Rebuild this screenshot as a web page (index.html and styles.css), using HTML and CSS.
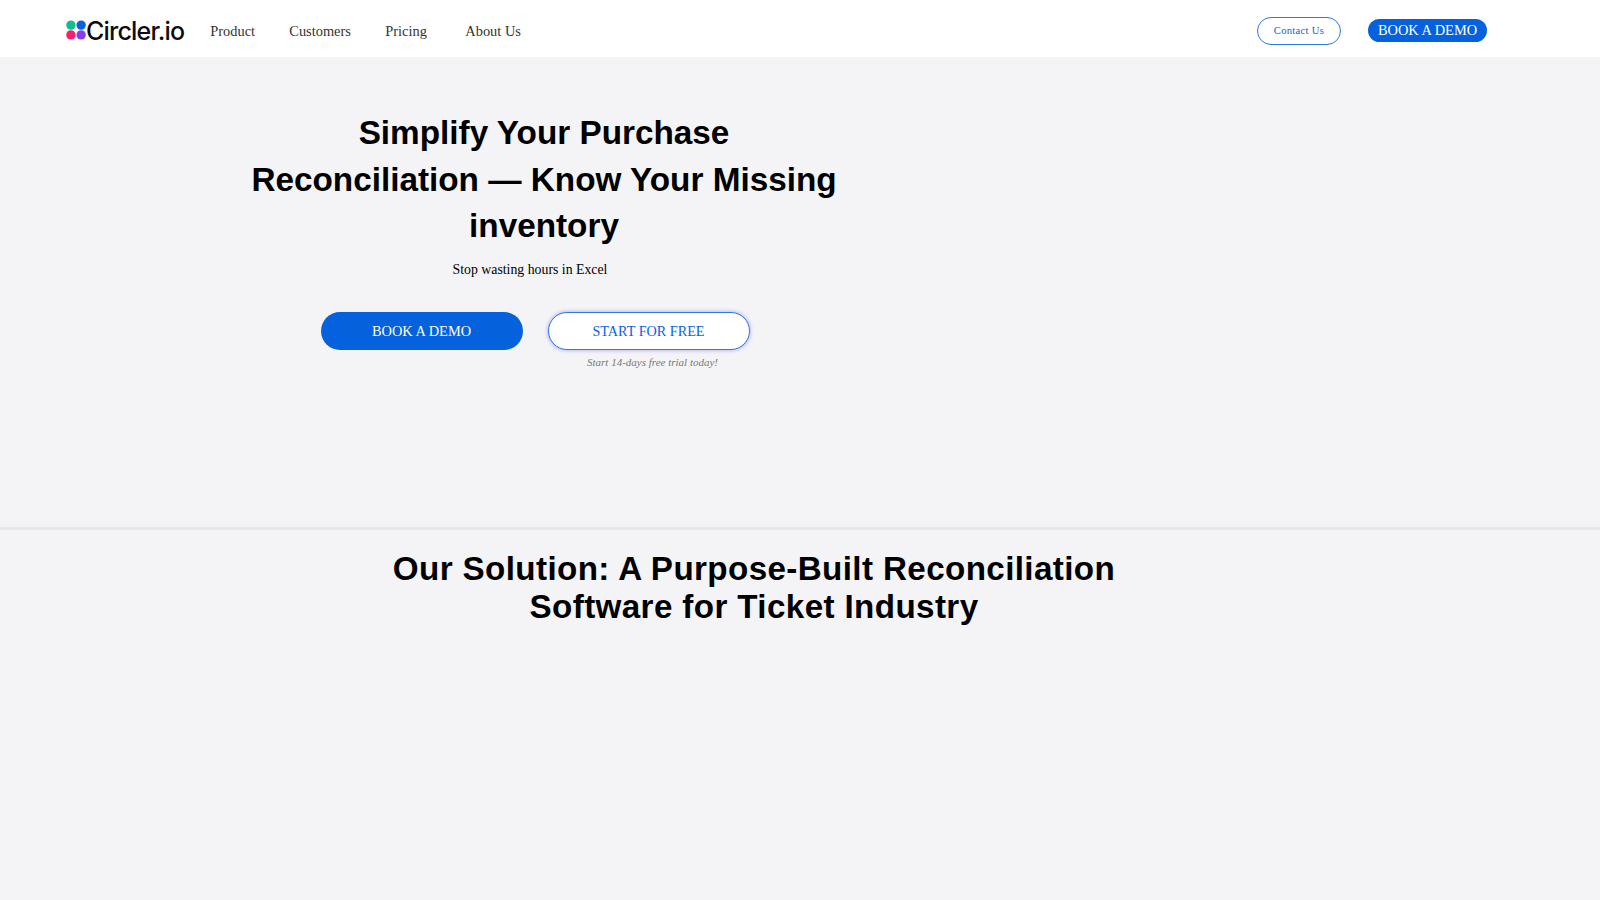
FILE: index.html
```html
<!DOCTYPE html>
<html lang="en">
<head>
  <meta charset="UTF-8">
  <title>Circler.io</title>
  <link rel="stylesheet" href="styles.css">
</head>
<body>
  <header class="nav">
    <a class="logo" href="#">
      <svg class="logo-mark" width="20" height="20" viewBox="0 0 20.5 20">
        <circle cx="5" cy="5" r="4.8" fill="#0fbf8f"/>
        <circle cx="15.5" cy="5" r="4.8" fill="#0b62e0"/>
        <circle cx="5" cy="15" r="4.8" fill="#f5206f"/>
        <circle cx="15.5" cy="15" r="4.8" fill="#8a3cf0"/>
      </svg>
      <span>Circler.io</span>
    </a>
    <nav class="nav-links">
      <a href="#">Product</a>
      <a href="#">Customers</a>
      <a href="#">Pricing</a>
      <a href="#">About Us</a>
    </nav>
    <div class="nav-actions">
      <a class="contact" href="#">Contact Us</a>
      <a class="demo-small" href="#">BOOK A DEMO</a>
    </div>
  </header>

  <section class="hero">
    <div class="hero-inner">
      <h1>Simplify Your Purchase Reconciliation — Know Your Missing inventory</h1>
      <p class="sub">Stop wasting hours in Excel</p>
      <div class="cta">
        <a class="btn btn-blue" href="#">BOOK A DEMO</a>
        <div class="cta-free">
          <a class="btn btn-white" href="#">START FOR FREE</a>
          <p class="trial">Start 14-days free trial today!</p>
        </div>
      </div>
    </div>
  </section>

  <section class="solution">
    <h2>Our Solution: A Purpose-Built Reconciliation Software for Ticket Industry</h2>
  </section>
</body>
</html>
```

FILE: styles.css
```css
* { box-sizing: border-box; }
html, body { height: 100%; }
body { margin: 0; background: #f4f4f7; font-family: "Liberation Serif", "Times New Roman", serif; color: #000; overflow: hidden; }
a { text-decoration: none; color: inherit; }

.nav { display: flex; align-items: center; height: 57px; padding: 4px 113px 0 66px; background: #fff; }
.logo { display: flex; align-items: center; font-family: "Inter", "Liberation Sans", sans-serif; font-size: 25px; font-weight: 500; letter-spacing: -0.8px; color: #0c0c10; }
.logo-mark { margin-bottom: 2px; }
.nav-links { display: flex; margin: 2px 0 0 26px; font-size: 14.4px; color: #333; }
.nav-links a:nth-child(1) { width: 79px; }
.nav-links a:nth-child(2) { width: 96px; }
.nav-links a:nth-child(3) { width: 81px; margin-right: -1px; }
.nav-actions { display: flex; align-items: center; gap: 27px; margin-left: auto; }
.contact { display: flex; align-items: center; justify-content: center; width: 84px; height: 28px; border: 1px solid #2f78e4; border-radius: 14px; background: #fff; color: #0b62e0; font-size: 10.6px; letter-spacing: 0.3px; }
.demo-small { display: flex; align-items: center; justify-content: center; width: 119px; height: 23px; border-radius: 12px; background: #0561dc; color: #fff; font-size: 14.4px; }

.hero { height: 473px; border-bottom: 3px solid #e6e7ec; }
.hero-inner { width: 600px; margin-left: 244px; padding-top: 53px; }
h1 { margin: 0; font-family: "Liberation Sans", Arial, sans-serif; font-size: 33.3px; line-height: 46.7px; font-weight: 700; text-align: center; }
.sub { margin: 10px 0 0 -28px; font-size: 13.8px; line-height: 20px; text-align: center; }
.cta { display: flex; gap: 25px; margin: 32px 0 0 76.5px; }
.btn { display: flex; align-items: center; justify-content: center; width: 202px; height: 38px; border-radius: 19px; font-size: 14.4px; }
.btn-blue { background: #0561dc; color: #fff; }
.btn-white { background: #fff; color: #0b62e0; border: 1.5px solid #2f78e4; box-shadow: 0 0 4px rgba(60, 60, 220, 0.45); font-size: 14.2px; }
.trial { margin: 6px 0 0 8px; font-size: 11px; line-height: 13px; font-style: italic; color: #777; text-align: center; }

.solution { padding-top: 20px; }
h2 { width: 760px; margin: 0 0 0 374px; font-family: "Liberation Sans", Arial, sans-serif; font-size: 33.2px; line-height: 38px; font-weight: 700; letter-spacing: 0.38px; text-align: center; }
```
